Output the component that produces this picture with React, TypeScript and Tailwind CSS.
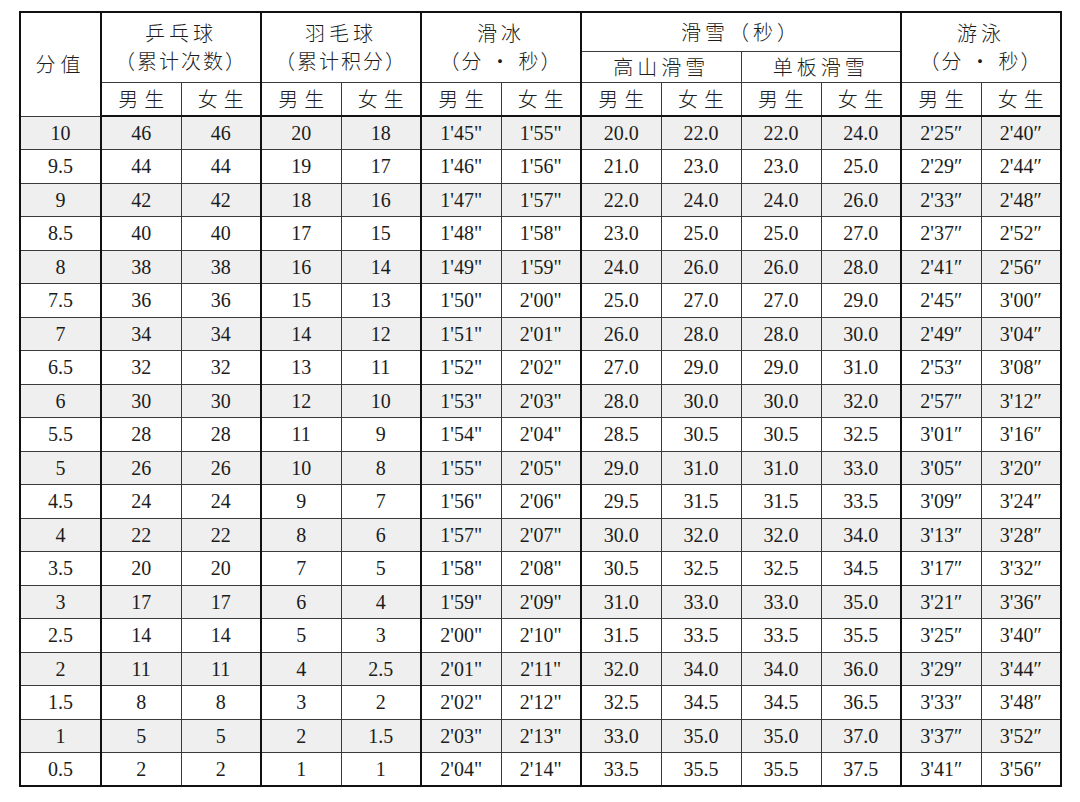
const rows: string[][] = [
  ["10", "46", "46", "20", "18", "1'45\"", "1'55\"", "20.0", "22.0", "22.0", "24.0", "2'25″", "2'40″"],
  ["9.5", "44", "44", "19", "17", "1'46\"", "1'56\"", "21.0", "23.0", "23.0", "25.0", "2'29″", "2'44″"],
  ["9", "42", "42", "18", "16", "1'47\"", "1'57\"", "22.0", "24.0", "24.0", "26.0", "2'33″", "2'48″"],
  ["8.5", "40", "40", "17", "15", "1'48\"", "1'58\"", "23.0", "25.0", "25.0", "27.0", "2'37″", "2'52″"],
  ["8", "38", "38", "16", "14", "1'49\"", "1'59\"", "24.0", "26.0", "26.0", "28.0", "2'41″", "2'56″"],
  ["7.5", "36", "36", "15", "13", "1'50\"", "2'00\"", "25.0", "27.0", "27.0", "29.0", "2'45″", "3'00″"],
  ["7", "34", "34", "14", "12", "1'51\"", "2'01\"", "26.0", "28.0", "28.0", "30.0", "2'49″", "3'04″"],
  ["6.5", "32", "32", "13", "11", "1'52\"", "2'02\"", "27.0", "29.0", "29.0", "31.0", "2'53″", "3'08″"],
  ["6", "30", "30", "12", "10", "1'53\"", "2'03\"", "28.0", "30.0", "30.0", "32.0", "2'57″", "3'12″"],
  ["5.5", "28", "28", "11", "9", "1'54\"", "2'04\"", "28.5", "30.5", "30.5", "32.5", "3'01″", "3'16″"],
  ["5", "26", "26", "10", "8", "1'55\"", "2'05\"", "29.0", "31.0", "31.0", "33.0", "3'05″", "3'20″"],
  ["4.5", "24", "24", "9", "7", "1'56\"", "2'06\"", "29.5", "31.5", "31.5", "33.5", "3'09″", "3'24″"],
  ["4", "22", "22", "8", "6", "1'57\"", "2'07\"", "30.0", "32.0", "32.0", "34.0", "3'13″", "3'28″"],
  ["3.5", "20", "20", "7", "5", "1'58\"", "2'08\"", "30.5", "32.5", "32.5", "34.5", "3'17″", "3'32″"],
  ["3", "17", "17", "6", "4", "1'59\"", "2'09\"", "31.0", "33.0", "33.0", "35.0", "3'21″", "3'36″"],
  ["2.5", "14", "14", "5", "3", "2'00\"", "2'10\"", "31.5", "33.5", "33.5", "35.5", "3'25″", "3'40″"],
  ["2", "11", "11", "4", "2.5", "2'01\"", "2'11\"", "32.0", "34.0", "34.0", "36.0", "3'29″", "3'44″"],
  ["1.5", "8", "8", "3", "2", "2'02\"", "2'12\"", "32.5", "34.5", "34.5", "36.5", "3'33″", "3'48″"],
  ["1", "5", "5", "2", "1.5", "2'03\"", "2'13\"", "33.0", "35.0", "35.0", "37.0", "3'37″", "3'52″"],
  ["0.5", "2", "2", "1", "1", "2'04\"", "2'14\"", "33.5", "35.5", "35.5", "37.5", "3'41″", "3'56″"],
]

// columns that start a new group get a heavy left rule
const groupStart = [1, 3, 5, 7, 11]

const thin = "border border-[#3a3a3a] p-0 text-center align-middle"
const thick = "border-l-2 border-l-[#111]"

export default function App() {
  return (
    <div className="min-h-[802px] bg-white pl-[19px] pt-[11px]">
      <table className="w-[1042px] table-fixed border-collapse border-2 border-[#111] font-['Liberation_Serif','Noto_Sans_CJK_SC',serif] text-[20px] text-[#1c1c1c]">
        <colgroup>
          <col className="w-[81px]" />
          {Array.from({ length: 12 }).map((_, i) => (
            <col key={i} className="w-[80px]" />
          ))}
        </colgroup>
        <thead className="font-['Noto_Sans_CJK_SC',sans-serif] font-light">
          <tr className="h-[39px]">
            <th rowSpan={3} className={`${thin} font-light tracking-[5px]`}>
              分值
            </th>
            <th rowSpan={2} colSpan={2} className={`${thin} ${thick} font-light leading-[28px]`}>
              <div className="tracking-[4px]">乒乓球</div>
              <div className="tracking-[2px]">（累计次数）</div>
            </th>
            <th rowSpan={2} colSpan={2} className={`${thin} ${thick} font-light leading-[28px]`}>
              <div className="tracking-[4px]">羽毛球</div>
              <div className="tracking-[2px]">（累计积分）</div>
            </th>
            <th rowSpan={2} colSpan={2} className={`${thin} ${thick} font-light leading-[28px]`}>
              <div className="tracking-[4px]">滑冰</div>
              <div className="tracking-[2px]">（分 · 秒）</div>
            </th>
            <th colSpan={4} className={`${thin} ${thick} font-light tracking-[4px]`}>
              滑雪（秒）
            </th>
            <th rowSpan={2} colSpan={2} className={`${thin} ${thick} font-light leading-[28px]`}>
              <div className="tracking-[4px]">游泳</div>
              <div className="tracking-[2px]">（分 · 秒）</div>
            </th>
          </tr>
          <tr className="h-[29px]">
            <th colSpan={2} className={`${thin} ${thick} font-light tracking-[4px]`}>
              高山滑雪
            </th>
            <th colSpan={2} className={`${thin} font-light tracking-[4px]`}>
              单板滑雪
            </th>
          </tr>
          <tr className="h-[34px]">
            {Array.from({ length: 12 }).map((_, i) => (
              <th
                key={i}
                className={`${thin} ${groupStart.includes(i + 1) ? thick : ""} border-b-2 border-b-[#111] font-light tracking-[6px]`}
              >
                <span className="pl-[6px]">{i % 2 === 0 ? "男生" : "女生"}</span>
              </th>
            ))}
          </tr>
        </thead>
        <tbody>
          {rows.map((r, ri) => (
            <tr key={ri} className={`h-[33.5px] ${ri % 2 === 0 ? "bg-[#efefef]" : "bg-white"}`}>
              {r.map((v, ci) => (
                <td key={ci} className={`${thin} ${groupStart.includes(ci) ? thick : ""} leading-none`}>
                  {v}
                </td>
              ))}
            </tr>
          ))}
        </tbody>
      </table>
    </div>
  )
}
